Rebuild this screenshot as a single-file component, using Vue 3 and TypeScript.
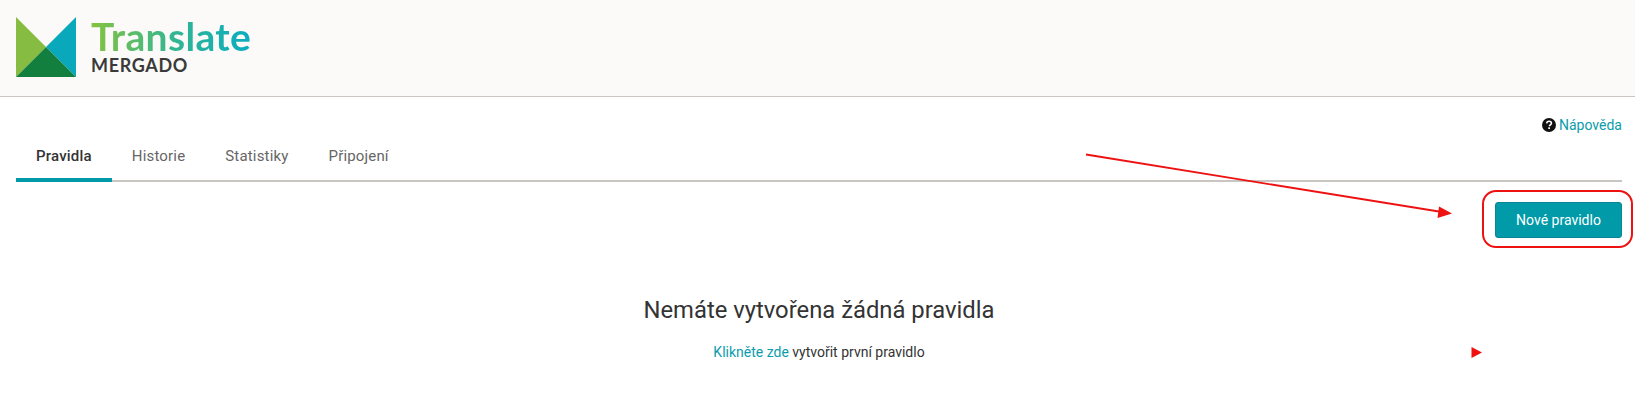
<script setup lang="ts">
const tabs: { label: string; active?: boolean }[] = [
  { label: 'Pravidla', active: true },
  { label: 'Historie' },
  { label: 'Statistiky' },
  { label: 'Připojení' },
]
</script>

<template>
  <div class="page">
    <header class="header">
      <svg class="mark" width="60" height="60" viewBox="0 0 60 60">
        <polygon points="0,0 30,30 0,60" fill="#86bc41" />
        <polygon points="60,0 60,60 30,30" fill="#09a9bb" />
        <polygon points="0,60 30,30 60,60" fill="#127f3f" />
      </svg>
      <div class="brand">
        <div class="brand-name">Translate</div>
        <div class="brand-sub">MERGADO</div>
      </div>
    </header>
    <main class="content">
      <div class="help">
        <svg class="help-icon" width="14" height="14" viewBox="0 0 14 14">
          <circle cx="7" cy="7" r="7" fill="#111" />
          <path d="M4.7 5.4C4.8 4 5.8 3.2 7.1 3.2c1.3 0 2.3.8 2.3 2 0 1-.6 1.4-1.2 1.8-.5.3-.7.6-.7 1.2" fill="none" stroke="#fff" stroke-width="1.6" />
          <rect x="6.3" y="9.3" width="1.7" height="1.7" fill="#fff" />
        </svg>
        <a class="link">Nápověda</a>
      </div>
      <nav class="tabs">
        <a v-for="tab in tabs" :key="tab.label" class="tab" :class="{ active: tab.active }">{{ tab.label }}</a>
      </nav>
      <div class="actions">
        <button class="primary" type="button">Nové pravidlo</button>
      </div>
      <section class="empty">
        <h2 class="empty-title">Nemáte vytvořena žádná pravidla</h2>
        <p class="empty-text"><a class="link">Klikněte zde</a> vytvořit první pravidlo</p>
      </section>
    </main>
    <svg class="annotations" width="1635" height="405" viewBox="0 0 1635 405">
      <line x1="1086" y1="154.5" x2="1442" y2="212" stroke="#ee1111" stroke-width="1.8" />
      <polygon points="1452,213.5 1439,206.5 1437.5,218" fill="#ee1111" />
      <rect x="1483" y="191" width="149" height="56" rx="13" fill="none" stroke="#ee1111" stroke-width="2" />
      <polygon points="1471.5,347 1482,352.5 1471.5,358" fill="#ee1111" />
    </svg>
  </div>
</template>

<style>
html, body { margin: 0; background: #fff; }
</style>

<style scoped>
.page {
  position: relative;
  width: 1635px;
  height: 405px;
  overflow: hidden;
  font-family: Roboto, "Noto Sans", sans-serif;
  color: #333;
}
.header {
  box-sizing: border-box;
  height: 97px;
  background: #fbfaf8;
  border-bottom: 1px solid #cbc6c1;
  display: flex;
  align-items: flex-start;
  padding: 17px 0 0 16px;
  gap: 15px;
}
.mark { display: block; }
.brand { display: flex; flex-direction: column; }
.brand-name {
  font-family: Lato, sans-serif;
  font-weight: 700;
  font-size: 39px;
  line-height: 38px;
  letter-spacing: 0.35px;
  background: linear-gradient(90deg, #84c33f 0%, #2fb596 55%, #0aacc0 100%);
  -webkit-background-clip: text;
  background-clip: text;
  color: transparent;
}
.brand-sub {
  font-family: Lato, sans-serif;
  font-weight: 700;
  font-size: 18px;
  line-height: 20px;
  color: #3a3a3a;
  letter-spacing: 0.65px;
}
.content { padding: 0 13px 0 16px; }
.help {
  display: flex;
  justify-content: flex-end;
  align-items: center;
  gap: 3px;
  height: 18px;
  margin-top: 19px;
  font-size: 14px;
}
.help-icon { display: block; }
.link { color: #0b9dab; }
.tabs {
  display: flex;
  margin-top: 10px;
  border-bottom: 2px solid #c9c5c1;
  height: 36px;
}
.tab {
  box-sizing: border-box;
  height: 38px;
  padding: 0 20px;
  font-size: 15px;
  line-height: 24px;
  letter-spacing: 0.17px;
  color: #666;
  border-bottom: 4px solid transparent;
}
.tab.active {
  color: #333;
  font-weight: 500;
  letter-spacing: 0.2px;
  border-bottom-color: #009aa8;
}
.actions {
  display: flex;
  justify-content: flex-end;
  margin-top: 20px;
}
.primary {
  box-sizing: border-box;
  width: 127px;
  height: 36px;
  border: 1px solid #078693;
  border-radius: 3px;
  background: #009aa8;
  color: #fff;
  font-family: inherit;
  font-size: 14px;
  padding: 0;
}
.empty { text-align: center; margin-top: 56px; }
.empty-title {
  margin: 0;
  font-size: 23.8px;
  font-weight: 400;
  line-height: 32px;
  color: #333;
}
.empty-text {
  margin: 16px 0 0;
  font-size: 14px;
  line-height: 20px;
}
.annotations {
  position: absolute;
  left: 0;
  top: 0;
  pointer-events: none;
}
</style>
